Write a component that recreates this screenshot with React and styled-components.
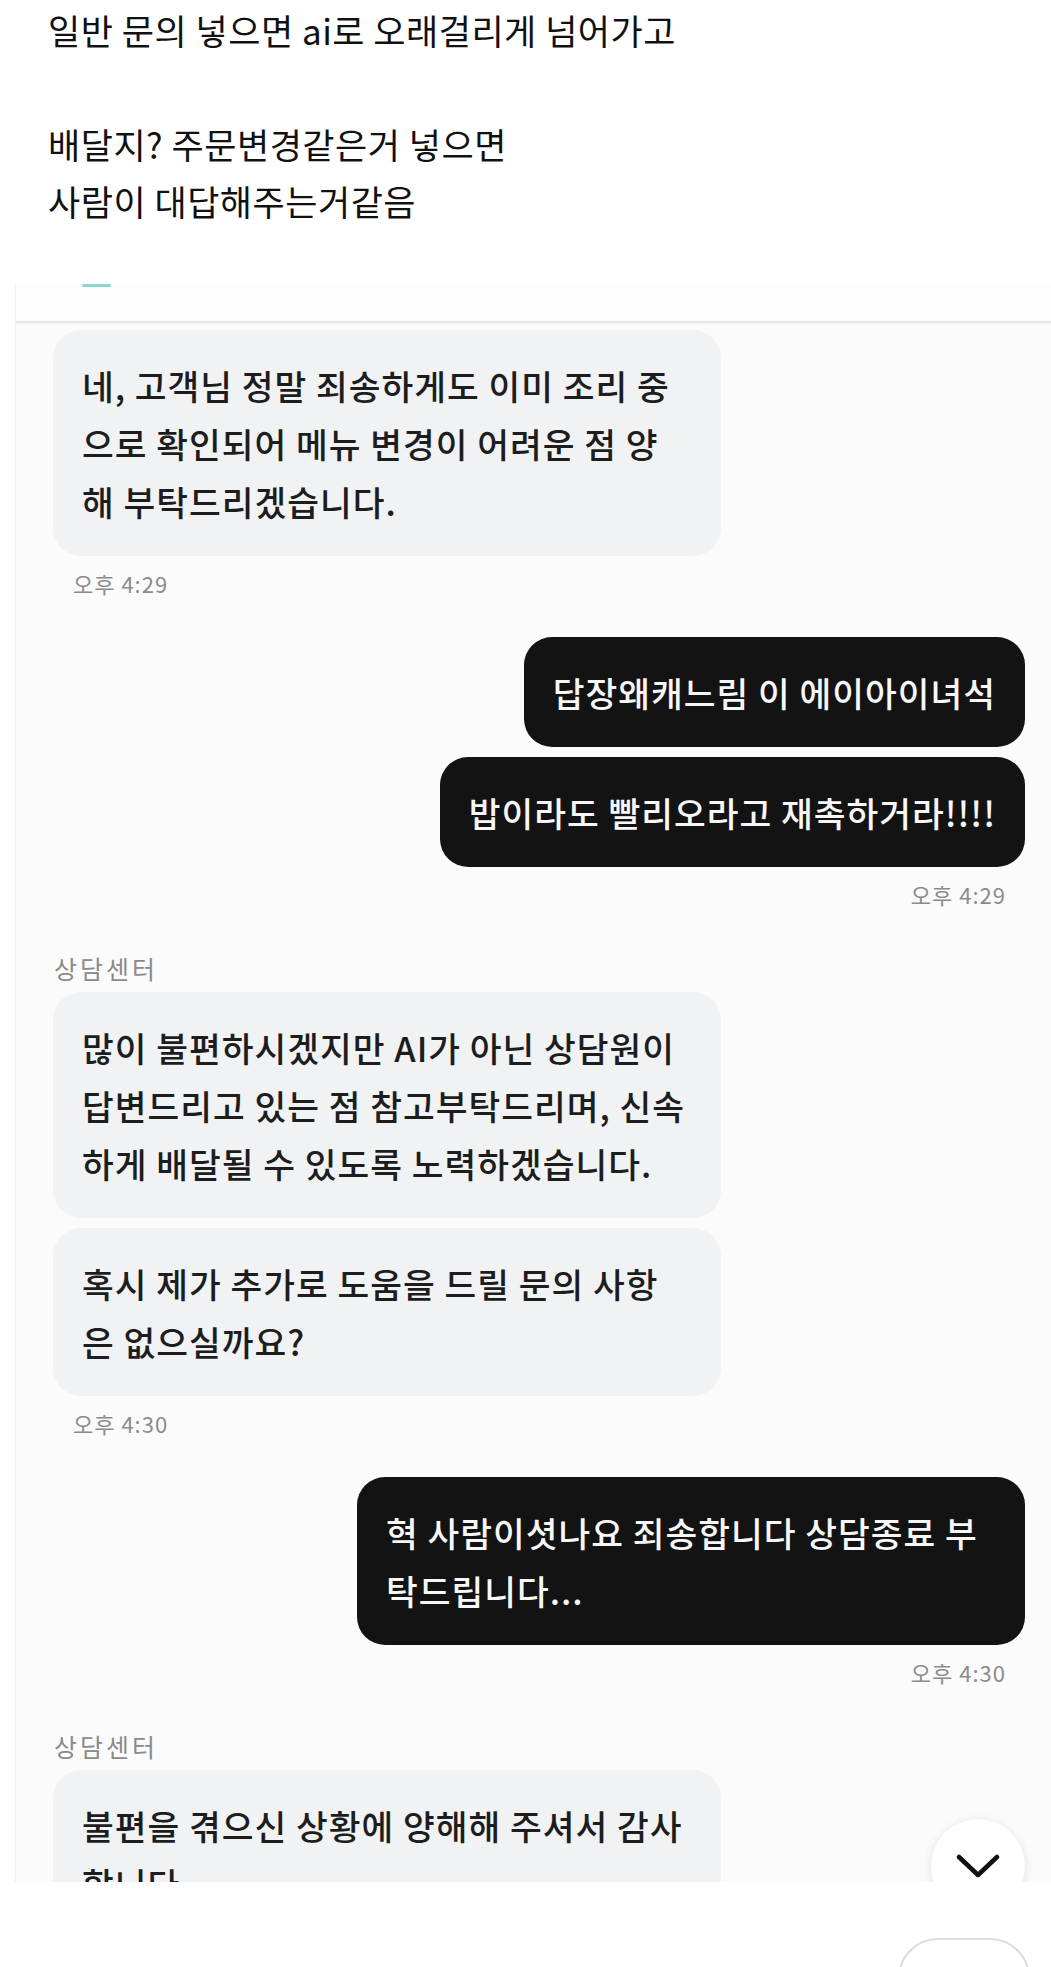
import React from "react";
import styled, { createGlobalStyle } from "styled-components";

const GlobalStyle = createGlobalStyle`
  html, body {
    margin: 0;
    padding: 0;
    background: #fff;
  }
  body {
    font-family: "Noto Sans CJK KR", "Noto Sans", sans-serif;
    color: #111;
    overflow: hidden;
  }
`;

const Page = styled.div`
  position: relative;
  height: 1967px;
  overflow: hidden;
`;

const PostBody = styled.div`
  padding: 1px 0 0 48px;
  font-size: 35px;
  line-height: 57px;
  letter-spacing: 0.5px;
  color: #111;
`;

const PostLine = styled.p`
  margin: 0;
  min-height: 57px;
`;

const ChatFrame = styled.section`
  position: relative;
  margin: 55px 0 0 15px;
  height: 1598px;
  overflow: hidden;
  background: #fbfbfb;
  border-left: 1px solid #f1f1f1;
`;

const ChatHeader = styled.div`
  height: 37px;
  background: #fdfdfd;
  border-bottom: 2px solid #e5e5e5;
  box-shadow: 0 1px 3px rgba(0, 0, 0, 0.06);
`;

const TabMark = styled.div`
  margin-left: 66px;
  width: 29px;
  height: 3px;
  border-radius: 2px;
  background: #86d8ce;
`;

const ChatBody = styled.div`
  display: flex;
  flex-direction: column;
  padding: 7px 26px 0 37px;
`;

const Group = styled.div`
  display: flex;
  flex-direction: column;
  align-items: ${(p) => (p.$mine ? "flex-end" : "flex-start")};
  gap: 10px;
  margin-top: ${(p) => p.$top || 0}px;
`;

const Sender = styled.div`
  padding: 0 1px;
  font-size: 25px;
  line-height: 28px;
  letter-spacing: 3px;
  color: #8a8a8a;
`;

const Bubble = styled.div`
  box-sizing: border-box;
  width: ${(p) => (p.$wide ? "668px" : "auto")};
  padding: 26px 29px;
  border-radius: 28px;
  background: ${(p) => (p.$mine ? "#131313" : "#f1f2f4")};
  color: ${(p) => (p.$mine ? "#f7f7f7" : "#1d1d1d")};
  font-size: 34.5px;
  font-weight: 500;
  line-height: 58px;
  letter-spacing: 1px;
`;

const Line = styled.span`
  display: block;
  white-space: nowrap;
`;

const Time = styled.div`
  margin-top: 5px;
  padding: 0 19px 0 20px;
  font-size: 22px;
  line-height: 24px;
  letter-spacing: 1px;
  color: #8b8b8b;
`;

const ScrollButton = styled.button`
  position: absolute;
  right: 25px;
  bottom: -32px;
  width: 96px;
  height: 96px;
  padding: 0;
  border: 1px solid #f0f0f0;
  border-radius: 50%;
  background: #fff;
  box-shadow: 0 2px 10px rgba(0, 0, 0, 0.09);
  display: flex;
  align-items: center;
  justify-content: center;
`;

const FloatingButton = styled.div`
  position: absolute;
  right: 21px;
  top: 1938px;
  width: 132px;
  height: 132px;
  box-sizing: border-box;
  border: 2px solid #dcdcdc;
  border-radius: 40px;
  background: #fff;
`;

const Message = ({ lines, mine, wide }) => (
  <Bubble $mine={mine} $wide={wide}>
    {lines.map((l, i) => (
      <Line key={i}>{l}</Line>
    ))}
  </Bubble>
);

const ChevronDown = () => (
  <svg width="44" height="24" viewBox="0 0 44 24" fill="none">
    <polyline
      points="3,3 22,21 41,3"
      stroke="#111"
      strokeWidth="4.5"
      strokeLinecap="round"
      strokeLinejoin="round"
    />
  </svg>
);

export default function App() {
  return (
    <Page>
      <GlobalStyle />
      <PostBody>
        <PostLine>일반 문의 넣으면 ai로 오래걸리게 넘어가고</PostLine>
        <PostLine />
        <PostLine>배달지? 주문변경같은거 넣으면</PostLine>
        <PostLine>사람이 대답해주는거같음</PostLine>
      </PostBody>

      <ChatFrame>
        <ChatHeader>
          <TabMark />
        </ChatHeader>
        <ChatBody>
          <Group>
            <Message
              wide
              lines={[
                "네, 고객님 정말 죄송하게도 이미 조리 중",
                "으로 확인되어 메뉴 변경이 어려운 점 양",
                "해 부탁드리겠습니다.",
              ]}
            />
            <Time>오후 4:29</Time>
          </Group>

          <Group $mine $top={42}>
            <Message mine lines={["답장왜캐느림 이 에이아이녀석"]} />
            <Message mine lines={["밥이라도 빨리오라고 재촉하거라!!!!"]} />
            <Time>오후 4:29</Time>
          </Group>

          <Group $top={48}>
            <Sender>상담센터</Sender>
            <Message
              wide
              lines={[
                "많이 불편하시겠지만 AI가 아닌 상담원이",
                "답변드리고 있는 점 참고부탁드리며, 신속",
                "하게 배달될 수 있도록 노력하겠습니다.",
              ]}
            />
            <Message
              wide
              lines={["혹시 제가 추가로 도움을 드릴 문의 사항", "은 없으실까요?"]}
            />
            <Time>오후 4:30</Time>
          </Group>

          <Group $mine $top={42}>
            <Message
              mine
              wide
              lines={["혁 사람이셧나요 죄송합니다 상담종료 부", "탁드립니다..."]}
            />
            <Time>오후 4:30</Time>
          </Group>

          <Group $top={48}>
            <Sender>상담센터</Sender>
            <Message
              wide
              lines={["불편을 겪으신 상황에 양해해 주셔서 감사", "합니다."]}
            />
          </Group>
        </ChatBody>
        <ScrollButton aria-label="scroll down">
          <ChevronDown />
        </ScrollButton>
      </ChatFrame>

      <FloatingButton />
    </Page>
  );
}
